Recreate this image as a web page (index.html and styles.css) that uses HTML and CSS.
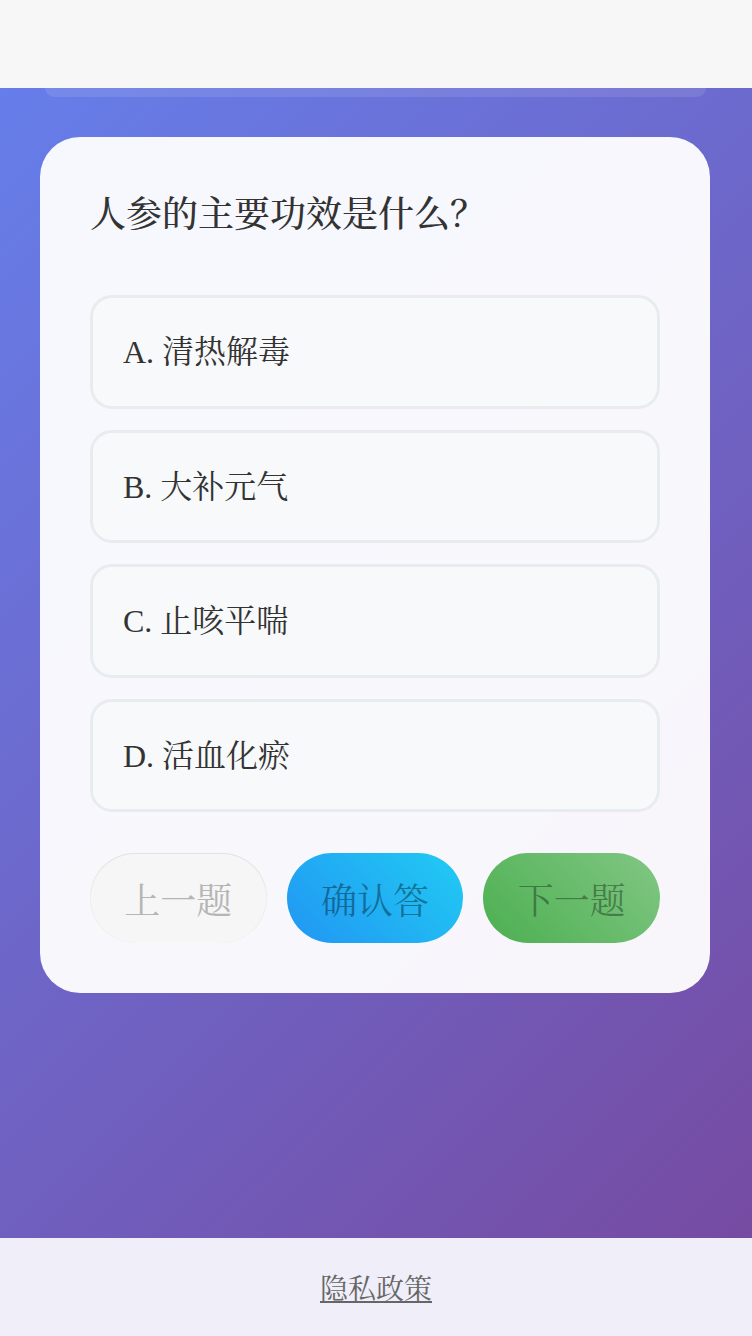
FILE: index.html
```html
<!DOCTYPE html>
<html lang="zh-CN">
<head>
<meta charset="utf-8">
<title>人参的主要功效是什么？</title>
<link rel="stylesheet" href="styles.css">
</head>
<body>
<div class="page">
  <header class="topbar"></header>
  <main class="main">
    <div class="stats-bar"></div>
    <section class="card">
      <h2 class="question">人参的主要功效是什么？</h2>
      <div class="options">
        <div class="option">A. 清热解毒</div>
        <div class="option">B. 大补元气</div>
        <div class="option">C. 止咳平喘</div>
        <div class="option">D. 活血化瘀</div>
      </div>
      <div class="actions">
        <button class="btn btn-prev">上一题</button>
        <button class="btn btn-confirm">确认答</button>
        <button class="btn btn-next">下一题</button>
      </div>
    </section>
  </main>
  <footer class="footer">
    <a class="privacy" href="#">隐私政策</a>
  </footer>
</div>
</body>
</html>
```

FILE: styles.css
```css
* { box-sizing: border-box; }
html, body {
  margin: 0;
  padding: 0;
}
body {
  font-family: "Liberation Serif", "Noto Serif CJK SC", "Noto Sans CJK SC", serif;
  color: #333;
  background: #f7f7f7;
}
.page {
  width: 752px;
  height: 1336px;
  display: flex;
  flex-direction: column;
}
.topbar {
  height: 88px;
  background: #f7f7f7;
  flex: none;
}
.main {
  flex: 1;
  background: linear-gradient(135deg, #667eea 0%, #764ba2 100%);
  padding: 0 0 0 40px;
  display: flex;
  flex-direction: column;
}
.stats-bar {
  height: 9px;
  margin: 0 46px 0 5px;
  background: rgba(255, 255, 255, 0.1);
  border-radius: 0 0 16px 16px;
}
.card {
  margin-top: 40px;
  width: 670px;
  background: rgba(255, 255, 255, 0.95);
  border-radius: 40px;
  padding: 50px;
}
.question {
  margin: 0 0 52px 0;
  font-size: 36px;
  line-height: 56px;
  font-weight: 500;
  color: #333;
}
.options {
  display: flex;
  flex-direction: column;
  gap: 21px;
}
.option {
  height: 113.5px;
  border: 3px solid #e9ecef;
  border-radius: 22px;
  background: #f8f9fa;
  padding: 0 30px 5px;
  font-size: 32px;
  display: flex;
  align-items: center;
  color: #333;
}
.actions {
  margin-top: 41px;
  display: grid;
  grid-template-columns: 1fr 1fr 1fr;
  gap: 20px;
}
.btn {
  height: 90px;
  border-radius: 45px;
  border: none;
  font-family: "Liberation Serif", "Noto Serif CJK SC", "Noto Sans CJK SC", serif;
  font-size: 36px;
  padding: 0;
}
.btn-prev {
  background: #f6f6f6;
  color: #b5b5b5;
  box-shadow: inset 0 1px 0 #e2e2e2, inset 1px 0 0 #eeeeee, inset -1px 0 0 #eeeeee;
}
.btn-confirm {
  background: linear-gradient(45deg, #2196f3 0%, #21cbf3 100%);
  color: rgba(0, 0, 0, 0.38);
}
.btn-next {
  background: linear-gradient(45deg, #4caf50 0%, #81c784 100%);
  color: rgba(0, 0, 0, 0.35);
}
.footer {
  height: 98px;
  flex: none;
  background: #f0eef8;
  display: flex;
  align-items: center;
  justify-content: center;
}
.privacy {
  font-size: 28px;
  color: #666;
  text-decoration: underline;
}
```
